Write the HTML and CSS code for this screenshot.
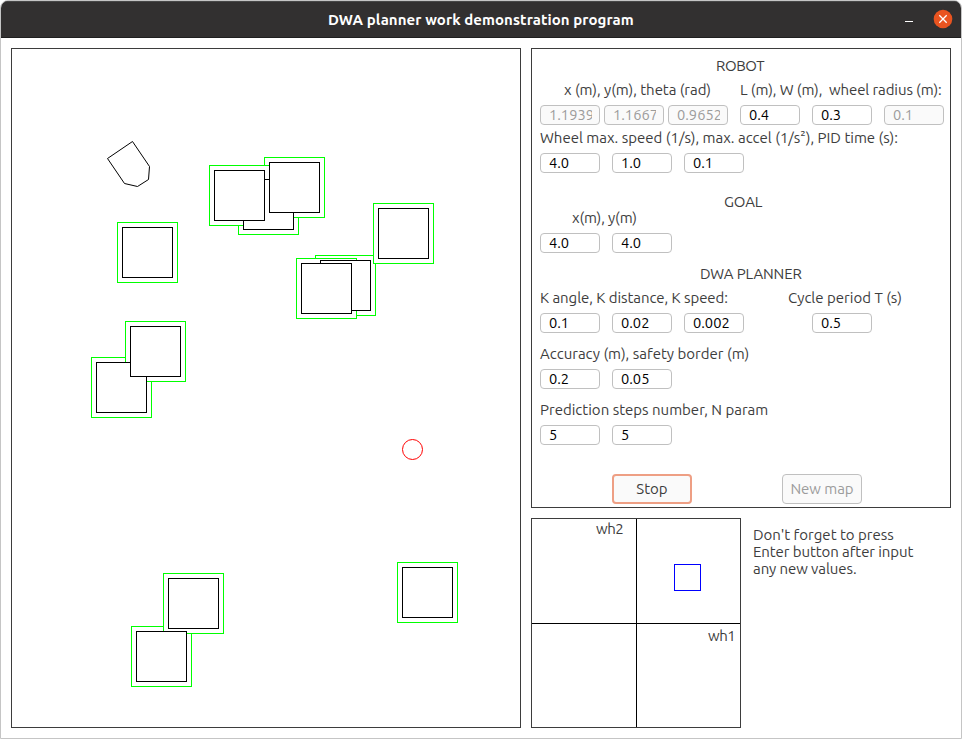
FILE: index.html
```html
<!DOCTYPE html>
<html lang="en">
<head>
<meta charset="utf-8">
<title>DWA planner work demonstration program</title>
<link rel="stylesheet" href="styles.css">
</head>
<body>
<div class="window">
  <header class="titlebar">
    <h1 class="title"><span class="t-title">DWA planner work demonstration program</span></h1>
    <svg class="controls" width="60" height="37" viewBox="0 0 60 37">
      <path d="M4 20.5h8" stroke="#fff" stroke-width="1"/>
      <circle cx="42" cy="18" r="9.3" fill="#e95420"/>
      <path d="M38.3 14.3l7.4 7.4M45.7 14.3l-7.4 7.4" stroke="#fff" stroke-width="1.3"/>
    </svg>
  </header>
  <main class="content">
    <svg class="map" width="510" height="680" viewBox="11 48 510 680">
      <defs>
        <rect id="border" x=".5" y=".5" width="60" height="60" fill="#fff" stroke="#0f0"/>
        <rect id="block" x="5.5" y="5.5" width="50" height="50" fill="#fff" stroke="#000"/>
      </defs>
      <rect x="11.5" y="48.5" width="509" height="679" fill="#fff" stroke="#3d3d3d"/>
      <use href="#border" x="238" y="174"/>
      <use href="#border" x="264" y="157"/>
      <use href="#border" x="209" y="165"/>
      <use href="#border" x="315" y="255"/>
      <use href="#border" x="373" y="203"/>
      <use href="#border" x="296" y="258"/>
      <use href="#border" x="117" y="222"/>
      <use href="#border" x="91" y="357"/>
      <use href="#border" x="125" y="321"/>
      <use href="#border" x="131" y="626"/>
      <use href="#border" x="163" y="573"/>
      <use href="#border" x="397" y="562"/>
      <use href="#block" x="238" y="174"/>
      <use href="#block" x="264" y="157"/>
      <use href="#block" x="209" y="165"/>
      <use href="#block" x="315" y="255"/>
      <use href="#block" x="373" y="203"/>
      <use href="#block" x="296" y="258"/>
      <use href="#block" x="117" y="222"/>
      <use href="#block" x="91" y="357"/>
      <use href="#block" x="125" y="321"/>
      <use href="#block" x="131" y="626"/>
      <use href="#block" x="163" y="573"/>
      <use href="#block" x="397" y="562"/>
      <path d="M107.5 158.5L132.5 141.5L149.5 166.5L148.5 179.5L137.5 186.5L124.5 183.5Z" fill="#fff" stroke="#000"/>
      <circle cx="412.5" cy="449.5" r="10" fill="#fff" stroke="#f00"/>
    </svg>
    <div class="side">
      <section class="panel">
        <h2 class="head robot"><span>ROBOT</span></h2>
        <div class="labels near"><span class="l-pose">x (m), y(m), theta (rad)</span><span class="l-size">L (m), W (m),&nbsp; wheel radius (m):</span></div>
        <div class="fields">
          <div class="tight"><div class="field off"><span>1.1939</span></div><div class="field off"><span>1.1667</span></div><div class="field off"><span>0.9652</span></div></div>
          <div class="field"><span>0.4</span></div><div class="field"><span>0.3</span></div><div class="field off"><span>0.1</span></div>
        </div>
        <div class="labels wheel"><span class="l-wheel">Wheel max. speed (1/s), max. accel (1/s²), PID time (s):</span></div>
        <div class="fields"><div class="field"><span>4.0</span></div><div class="field"><span>1.0</span></div><div class="field"><span>0.1</span></div></div>

        <h2 class="head goal"><span>GOAL</span></h2>
        <div class="labels"><span class="l-goal">x(m), y(m)</span></div>
        <div class="fields"><div class="field"><span>4.0</span></div><div class="field"><span>4.0</span></div></div>

        <h2 class="head planner"><span>DWA PLANNER</span></h2>
        <div class="labels near"><span class="l-k">K angle, K distance, K speed:</span><span class="l-cycle">Cycle period T (s)</span></div>
        <div class="fields"><div class="field"><span>0.1</span></div><div class="field"><span>0.02</span></div><div class="field"><span>0.002</span></div><div class="field period"><span>0.5</span></div></div>
        <div class="labels far"><span class="l-acc">Accuracy (m), safety border (m)</span></div>
        <div class="fields"><div class="field"><span>0.2</span></div><div class="field"><span>0.05</span></div></div>
        <div class="labels far"><span class="l-pred">Prediction steps number, N param</span></div>
        <div class="fields"><div class="field"><span>5</span></div><div class="field"><span>5</span></div></div>

        <div class="buttons"><button class="btn focus"><span class="b-stop">Stop</span></button><button class="btn" disabled><span class="b-new">New map</span></button></div>
      </section>
      <div class="bottom">
        <div class="wheels">
          <div class="quad q1"><span>wh2</span></div>
          <div class="quad q2"><div class="marker"></div></div>
          <div class="quad q3"></div>
          <div class="quad q4"><span>wh1</span></div>
        </div>
        <p class="note"><span class="n1">Don't forget to press</span><span class="n2">Enter button after input</span><span class="n3">any new values.</span></p>
      </div>
    </div>
  </main>
</div>
</body>
</html>
```
FILE: styles.css
```css
* { box-sizing: border-box; }
body {
  margin: 0;
  background: #fff;
  font: 15px/16px Ubuntu, "Noto Sans", sans-serif;
  color: #3d3d3d;
}
.window {
  width: 962px;
  height: 739px;
  border: 1px solid #c5c5c5;
  border-radius: 8px 8px 0 0;
  background: #fff;
  overflow: hidden;
}
.titlebar {
  display: grid;
  grid-template-columns: 1fr 60px;
  height: 37px;
  background: #323030;
  border-top: 1px solid #474747;
  border-bottom: 1px solid #1f1f1f;
}
.title {
  margin: 0;
  padding-left: 327px;
  font-size: 15px;
  letter-spacing: .07px;
  line-height: 36px;
  font-weight: 700;
  color: #fff;
  white-space: nowrap;
}
.controls { margin-top: -1px; }
.content { display: flex; gap: 10px; padding: 10px; }
.map { display: block; flex: none; }
.side { width: 420px; display: flex; flex-direction: column; gap: 10px; }
.panel { height: 460px; border: 1px solid #3d3d3d; padding: 9px 0 0 8px; }
.panel span, .note span, .quad span { white-space: pre; }
.head { margin: 0; font: inherit; height: 16px; letter-spacing: -.15px; }
.robot { padding-left: 176px; letter-spacing: -.4px; }
.goal { padding-left: 184px; margin-top: 21px; }
.planner { padding-left: 160px; margin-top: 13px; }
.labels { display: grid; grid-template-columns: 200px 1fr; height: 16px; }
.near { margin-top: 8px; }
.wheel { margin-top: 5px; }
.far { margin-top: 13px; }
.l-pose { padding-left: 24px; letter-spacing: -.05px; }
.l-size { letter-spacing: -.1px; }
.l-goal { padding-left: 32px; letter-spacing: -.15px; }
.l-k { letter-spacing: -.06px; }
.l-cycle { padding-left: 48px; }
.fields { display: flex; gap: 12px; margin-top: 7px; }
.tight { display: flex; gap: 4px; }
.field {
  width: 60px;
  height: 20px;
  border: 1px solid #c0c0c0;
  border-radius: 4px;
  padding: 0 7px 0 8px;
  font-size: 14.67px;
  line-height: 18px;
  color: #000;
  background: #fff;
}
.field span { display: block; overflow: hidden; }
.off { color: #9c9c9c; background: #fafafa; }
.period { margin-left: 56px; }
.buttons { display: flex; gap: 90px; margin: 29px 0 0 72px; }
.btn {
  width: 80px;
  height: 30px;
  padding: 0;
  border: 1px solid #c0c0c0;
  border-radius: 4px;
  background: #fafafa;
  color: #9c9c9c;
  font: inherit;
}
.b-new { letter-spacing: -.05px; }
.focus { border: 2px solid #ee9f84; color: #3d3d3d; }
.bottom { display: flex; gap: 12px; }
.wheels {
  width: 210px;
  height: 210px;
  border: 1px solid #3d3d3d;
  display: grid;
  grid-template: 105px 103px / 105px 103px;
}
.q1, .q2 { border-bottom: 1px solid #000; }
.q1, .q3 { border-right: 1px solid #000; }
.q1 { padding: 2px 0 0 64px; letter-spacing: -.5px; }
.q4 { padding: 4px 0 0 71px; letter-spacing: -.5px; }
.q2 { padding: 45px 0 0 37px; }
.marker { width: 27px; height: 27px; border: 1px solid #00f; }
.note { margin: 8px 0 0; display: flex; flex-direction: column; line-height: 17px; letter-spacing: -.08px; }
.n1 { letter-spacing: 0; }
```
